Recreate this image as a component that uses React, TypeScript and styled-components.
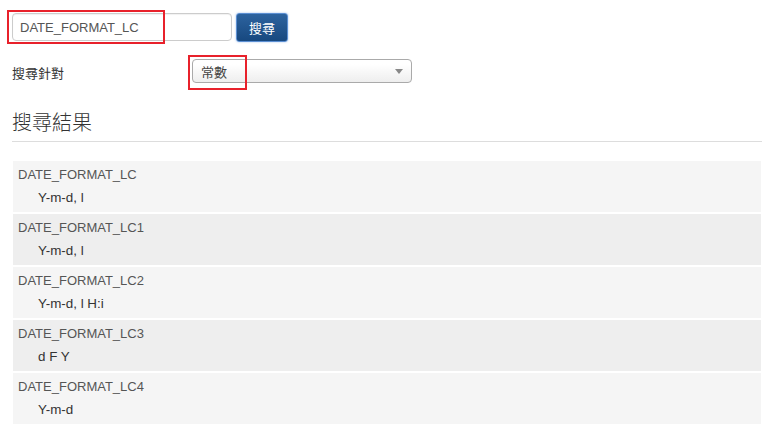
import React from "react";
import styled, { createGlobalStyle } from "styled-components";

const Global = createGlobalStyle`
  html, body { margin: 0; padding: 0; background: #fff; }
  body { font-family: "Liberation Sans", Arial, "Noto Sans CJK TC", sans-serif; color: #333; }
`;

const Page = styled.div`
  padding: 10px 12px 0 12px;
  width: 750px;
`;

const SearchRow = styled.div`
  display: flex;
  align-items: center;
  gap: 4px;
  height: 34px;
`;

const Highlight = styled.div`
  position: relative;
`;

const RedBox = styled.div<{ $w: number; $h: number; $l: number; $t: number }>`
  position: absolute;
  left: ${(p) => p.$l}px;
  top: ${(p) => p.$t}px;
  width: ${(p) => p.$w}px;
  height: ${(p) => p.$h}px;
  border: 2px solid #e8212b;
  box-sizing: border-box;
  pointer-events: none;
`;

const TextInput = styled.div`
  width: 220px;
  height: 28px;
  box-sizing: border-box;
  border: 1px solid #ccc;
  border-radius: 4px;
  padding: 0 7px;
  display: flex;
  align-items: center;
  font-size: 13px;
  color: #555;
  box-shadow: inset 0 1px 1px rgba(0, 0, 0, 0.06);
`;

const Button = styled.div`
  width: 52px;
  height: 29px;
  box-sizing: border-box;
  border: 1px solid #5b8fd3;
  border-radius: 3px;
  background: linear-gradient(#2d639f, #17487f);
  color: #fff;
  font-size: 13px;
  font-family: "Noto Sans CJK TC", sans-serif;
  display: flex;
  align-items: center;
  justify-content: center;
  box-shadow: 0 0 2px rgba(80, 140, 220, 0.6);
`;

const FilterRow = styled.div`
  display: flex;
  align-items: center;
  margin-top: 15px;
  height: 24px;
`;

const Label = styled.div`
  width: 180px;
  font-size: 13px;
  color: #333;
  font-family: "Noto Sans CJK TC", sans-serif;
  padding-top: 2px;
`;

const Select = styled.div`
  width: 220px;
  height: 24px;
  box-sizing: border-box;
  border: 1px solid #aaa;
  border-radius: 4px;
  background: linear-gradient(#fff 20%, #eee 100%);
  display: flex;
  align-items: center;
  justify-content: space-between;
  padding: 0 8px 0 8px;
  font-size: 13px;
  color: #444;
  font-family: "Noto Sans CJK TC", sans-serif;
`;

const Arrow = styled.span`
  width: 0;
  height: 0;
  border-left: 4px solid transparent;
  border-right: 4px solid transparent;
  border-top: 5px solid #888;
`;

const Heading = styled.h2`
  margin: 24px 0 0 0;
  padding-bottom: 4px;
  font-size: 20px;
  line-height: 30px;
  font-weight: 300;
  color: #333;
  font-family: "Noto Sans CJK TC", sans-serif;
  border-bottom: 1px solid #ddd;
`;

const Results = styled.div`
  margin-top: 19px;
  width: 748px;
  margin-left: 1px;
`;

const Row = styled.div<{ $alt: boolean }>`
  background: ${(p) => (p.$alt ? "#eeeeee" : "#f5f5f5")};
  padding: 4px 5px 3px;
  margin-bottom: 2px;
`;

const Key = styled.div`
  font-size: 13px;
  line-height: 20px;
  color: #555;
`;

const Value = styled.div`
  font-size: 13.4px;
  line-height: 22px;
  margin-top: 2px;
  color: #333;
  padding-left: 20px;
`;

const items = [
  ["DATE_FORMAT_LC", "Y-m-d, l"],
  ["DATE_FORMAT_LC1", "Y-m-d, l"],
  ["DATE_FORMAT_LC2", "Y-m-d, l H:i"],
  ["DATE_FORMAT_LC3", "d F Y"],
  ["DATE_FORMAT_LC4", "Y-m-d"],
];

export default function App() {
  return (
    <>
      <Global />
      <Page>
        <SearchRow>
          <Highlight>
            <TextInput>DATE_FORMAT_LC</TextInput>
            <RedBox $l={-5} $t={-3} $w={158} $h={34} />
          </Highlight>
          <Button>搜尋</Button>
        </SearchRow>
        <FilterRow>
          <Label>搜尋針對</Label>
          <Highlight>
            <Select>
              <span>常數</span>
              <Arrow />
            </Select>
            <RedBox $l={-4} $t={-4} $w={59} $h={35} />
          </Highlight>
        </FilterRow>
        <Heading>搜尋結果</Heading>
        <Results>
          {items.map(([k, v], i) => (
            <Row key={k} $alt={i % 2 === 1}>
              <Key>{k}</Key>
              <Value>{v}</Value>
            </Row>
          ))}
        </Results>
      </Page>
    </>
  );
}
